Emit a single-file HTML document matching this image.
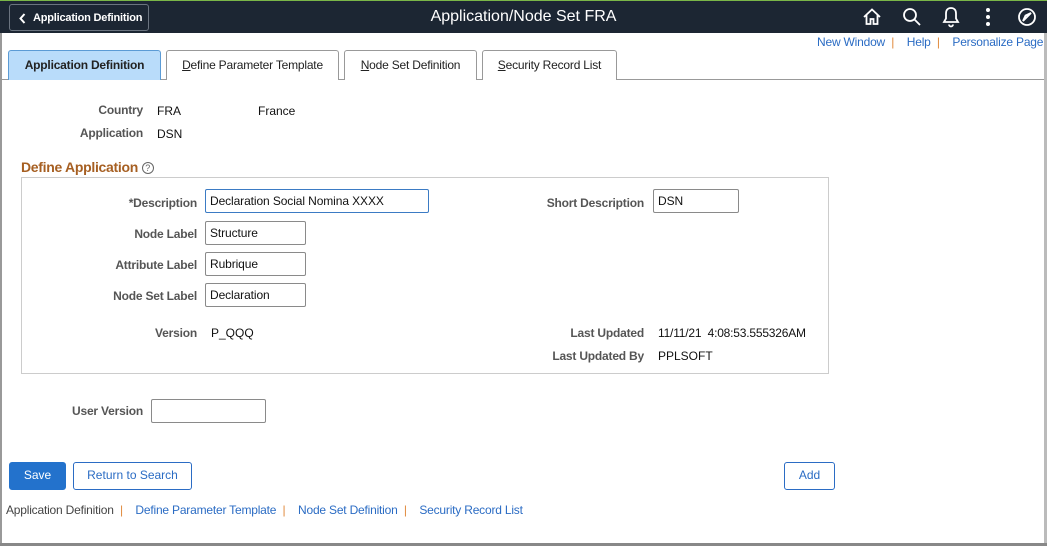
<!DOCTYPE html>
<html><head><style>
*{margin:0;padding:0;box-sizing:border-box}
body{width:1047px;height:546px;background:#fff;font-family:"Liberation Sans",sans-serif;font-size:12px;position:relative;overflow:hidden;color:#333}
.a{position:absolute;white-space:nowrap}
.hdr{left:0;top:0;width:1047px;height:33px;background:#1c2633;border-top:1px solid #7ab648}
.back{left:9px;top:4px;width:140px;height:27px;border:1px solid #6b7480;border-radius:3px;color:#fff;font-size:11px;font-weight:bold;line-height:27px;padding-left:23px;letter-spacing:-0.2px}
.title{left:0;width:1047px;top:8px;text-align:center;color:#fff;font-size:16px}
.lnk{color:#2b6cc4}
.bar{color:#e08a3c}
.tab{top:50px;height:30px;border:1px solid #999;border-bottom:none;border-radius:3px 3px 0 0;background:#fff;text-align:center;line-height:29px;font-size:12px;color:#222;letter-spacing:-0.2px}
.lbl{font-weight:bold;color:#555;text-align:right;letter-spacing:-0.2px}
.inp{height:24px;border:1px solid #8a8a8a;border-radius:2px;padding-left:4px;line-height:23px;color:#111;letter-spacing:-0.1px}
.btn{height:28px;border:1px solid #2b6cc4;border-radius:3px;text-align:center;line-height:25px;color:#2b6cc4}
</style></head><body>
<div class="a" style="left:0;top:0;width:2px;height:546px;background:#999"></div>
<div class="a" style="left:1044px;top:0;width:3px;height:546px;background:#bbb"></div>
<div class="a" style="left:0;top:543px;width:1047px;height:3px;background:#888"></div>
<div class="a hdr"></div>
<div class="a back"><svg style="position:absolute;left:9px;top:8px" width="7" height="11" viewBox="0 0 7 11"><path d="M5.5 1 1.5 5.5 5.5 10" stroke="#fff" stroke-width="2" fill="none"/></svg>Application Definition</div>
<div class="a title">Application/Node Set FRA</div>
<svg class="a" style="left:862px;top:7px" width="20" height="20" viewBox="0 0 20 20" fill="none" stroke="#fff" stroke-width="1.8"><path d="M2 10 10 2.5 18 10M4.5 8v9h4v-5h3v5h4V8"/></svg>
<svg class="a" style="left:902px;top:7px" width="20" height="20" viewBox="0 0 20 20" fill="none" stroke="#fff" stroke-width="1.8"><circle cx="8" cy="8" r="6"/><path d="M12.5 12.5 18 18"/></svg>
<svg class="a" style="left:941px;top:6px" width="20" height="22" viewBox="0 0 20 22" fill="none" stroke="#fff" stroke-width="1.8"><path d="M10 2c-3.5 0-5 2.5-5 5.5v5L3 16h14l-2-3.5v-5C15 4.5 13.5 2 10 2zM8 18.5a2 2 0 0 0 4 0"/></svg>
<svg class="a" style="left:984px;top:7px" width="8" height="20" viewBox="0 0 8 20" fill="#fff"><circle cx="4" cy="3" r="2"/><circle cx="4" cy="10" r="2"/><circle cx="4" cy="17" r="2"/></svg>
<svg class="a" style="left:1017px;top:7px" width="20" height="20" viewBox="0 0 20 20" fill="none" stroke="#fff" stroke-width="1.8"><circle cx="10" cy="10" r="8"/><path d="M14 6 8.5 11.5 6 14l2.5-5.5z"/></svg>
<div class="a" style="left:817px;top:35px;letter-spacing:-0.2px"><span class="lnk">New Window</span><span class="bar">&nbsp;&nbsp;|&nbsp;&nbsp;&nbsp;&nbsp;</span><span class="lnk">Help</span><span class="bar">&nbsp;&nbsp;|&nbsp;&nbsp;&nbsp;&nbsp;</span><span class="lnk">Personalize Page</span></div>
<div class="a" style="left:2px;top:79px;width:1042px;height:1px;background:#999"></div>
<div class="a tab" style="left:8px;width:153px;background:#b9dcfa;border-color:#5b9bd5;font-weight:bold">Application Definition</div>
<div class="a tab" style="left:166px;width:173px"><u>D</u>efine Parameter Template</div>
<div class="a tab" style="left:344px;width:133px"><u>N</u>ode Set Definition</div>
<div class="a tab" style="left:482px;width:135px"><u>S</u>ecurity Record List</div>
<div class="a lbl" style="left:40px;width:103px;top:103px">Country</div>
<div class="a" style="left:157px;top:104px;color:#111">FRA</div>
<div class="a" style="left:258px;top:104px;color:#111">France</div>
<div class="a lbl" style="left:40px;width:103px;top:126px">Application</div>
<div class="a" style="left:157px;top:127px;color:#111">DSN</div>
<div class="a" style="left:21px;top:159px;font-size:14px;font-weight:bold;color:#a65f22;letter-spacing:-0.3px">Define Application <span style="display:inline-block;width:12px;height:12px;border:1px solid #666;border-radius:50%;font-size:9px;line-height:10px;text-align:center;color:#666;font-weight:normal;vertical-align:1px">?</span></div>
<div class="a" style="left:21px;top:177px;width:808px;height:197px;border:1px solid #ccc"></div>
<div class="a lbl" style="left:40px;width:157px;top:196px">*Description</div>
<div class="a inp" style="left:205px;top:189px;width:224px;border-color:#3b7bc4">Declaration Social Nomina XXXX</div>
<div class="a lbl" style="left:40px;width:157px;top:227px">Node Label</div>
<div class="a inp" style="left:205px;top:221px;width:101px">Structure</div>
<div class="a lbl" style="left:40px;width:157px;top:258px">Attribute Label</div>
<div class="a inp" style="left:205px;top:252px;width:101px">Rubrique</div>
<div class="a lbl" style="left:40px;width:157px;top:289px">Node Set Label</div>
<div class="a inp" style="left:205px;top:283px;width:101px">Declaration</div>
<div class="a lbl" style="left:40px;width:157px;top:326px">Version</div>
<div class="a" style="left:211px;top:326px;color:#111">P_QQQ</div>
<div class="a lbl" style="left:480px;width:164px;top:196px">Short Description</div>
<div class="a inp" style="left:653px;top:189px;width:86px">DSN</div>
<div class="a lbl" style="left:480px;width:164px;top:326px">Last Updated</div>
<div class="a" style="left:658px;top:326px;color:#111;letter-spacing:-0.2px">11/11/21&nbsp; 4:08:53.555326AM</div>
<div class="a lbl" style="left:480px;width:164px;top:349px">Last Updated By</div>
<div class="a" style="left:658px;top:349px;color:#111">PPLSOFT</div>
<div class="a lbl" style="left:40px;width:103px;top:404px">User Version</div>
<div class="a inp" style="left:151px;top:399px;width:115px"></div>
<div class="a btn" style="left:9px;top:462px;width:57px;background:#2372cc;border-color:#2372cc;color:#fff">Save</div>
<div class="a btn" style="left:73px;top:462px;width:119px">Return to Search</div>
<div class="a btn" style="left:784px;top:462px;width:51px">Add</div>
<div class="a" style="left:6px;top:503px;letter-spacing:-0.2px"><span style="color:#444">Application Definition</span><span class="bar">&nbsp;&nbsp;|&nbsp;&nbsp;&nbsp;&nbsp;</span><span class="lnk">Define Parameter Template</span><span class="bar">&nbsp;&nbsp;|&nbsp;&nbsp;&nbsp;&nbsp;</span><span class="lnk">Node Set Definition</span><span class="bar">&nbsp;&nbsp;|&nbsp;&nbsp;&nbsp;&nbsp;</span><span class="lnk">Security Record List</span></div>
</body></html>
